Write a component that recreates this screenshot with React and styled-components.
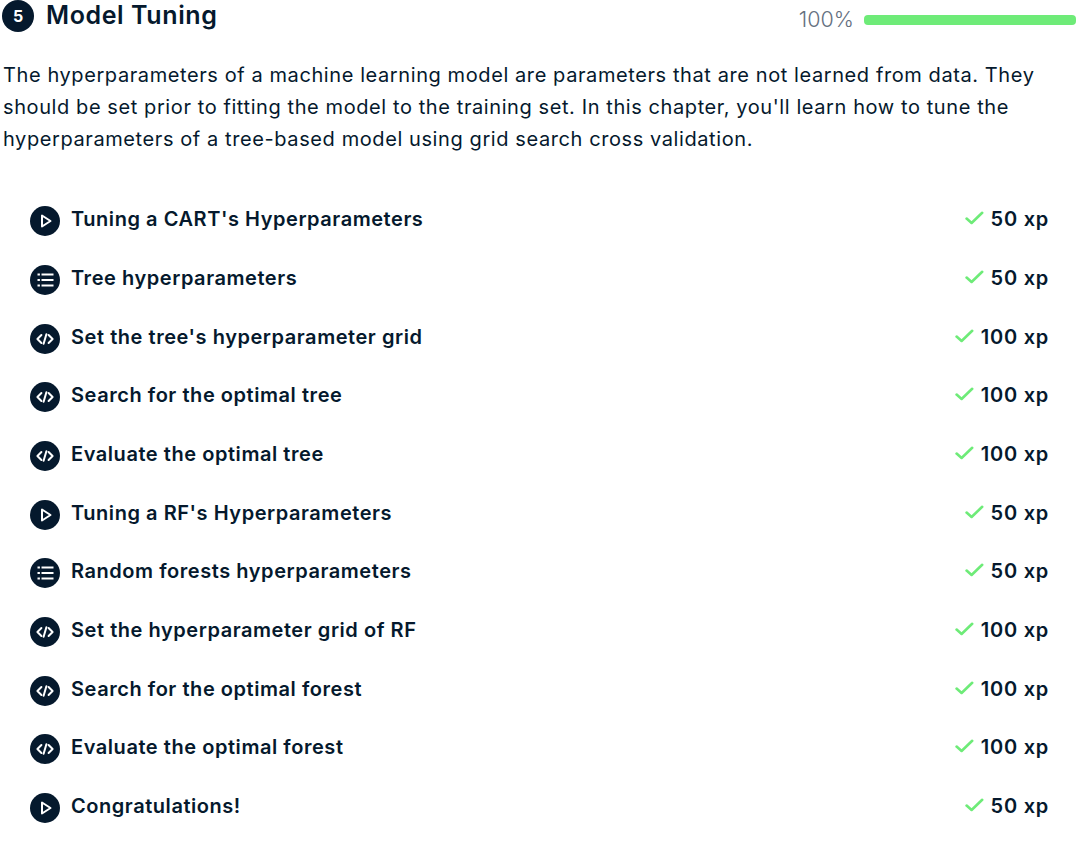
import styled, { createGlobalStyle } from 'styled-components';

const GlobalStyle = createGlobalStyle`
  html, body {
    margin: 0;
    padding: 0;
    background: #fff;
  }
`;

const lessons = [
  { kind: 'video', title: "Tuning a CART's Hyperparameters", xp: 50 },
  { kind: 'quiz', title: 'Tree hyperparameters', xp: 50 },
  { kind: 'code', title: "Set the tree's hyperparameter grid", xp: 100 },
  { kind: 'code', title: 'Search for the optimal tree', xp: 100 },
  { kind: 'code', title: 'Evaluate the optimal tree', xp: 100 },
  { kind: 'video', title: "Tuning a RF's Hyperparameters", xp: 50 },
  { kind: 'quiz', title: 'Random forests hyperparameters', xp: 50 },
  { kind: 'code', title: 'Set the hyperparameter grid of RF', xp: 100 },
  { kind: 'code', title: 'Search for the optimal forest', xp: 100 },
  { kind: 'code', title: 'Evaluate the optimal forest', xp: 100 },
  { kind: 'video', title: 'Congratulations!', xp: 50 },
];

const LessonIcon = ({ kind }) => (
  <IconCircle>
    <svg width="30" height="30" viewBox="0 0 30 30" fill="none" stroke="#fff" strokeLinejoin="round">
      {kind === 'video' && <path d="M12 9.5v11l8.5-5.5z" strokeWidth="2" strokeLinecap="round" />}
      {kind === 'quiz' && (
        <path d="M11.5 9.5h12M11.5 15h12M11.5 20.5h12M7.5 9.5h2.4M7.5 15h2.4M7.5 20.5h2.4" strokeWidth="1.9" />
      )}
      {kind === 'code' && (
        <path
          d="M11.4 11 7.4 15l4 4M18.6 11l4 4-4 4M16.4 10.2l-2.8 9.6"
          strokeWidth="2"
          strokeLinecap="round"
        />
      )}
    </svg>
  </IconCircle>
);

const Check = () => (
  <CheckMark width="19" height="14" viewBox="0 0 19 14" fill="none">
    <path d="M1.6 7.6 6.6 12 17.2 1.8" stroke="#6eeb78" strokeWidth="2.6" strokeLinecap="round" strokeLinejoin="round" />
  </CheckMark>
);

export default function App() {
  return (
    <Page>
      <GlobalStyle />
      <Header>
        <Heading>
          <Badge>5</Badge>
          <Title>Model Tuning</Title>
        </Heading>
        <Progress>
          <Percent>100%</Percent>
          <Track>
            <Fill style={{ width: '100%' }} />
          </Track>
        </Progress>
      </Header>
      <Description>
        The hyperparameters of a machine learning model are parameters that are not learned from data. They
        <br />
        should be set prior to fitting the model to the training set. In this chapter, you'll learn how to tune the
        <br />
        hyperparameters of a tree-based model using grid search cross validation.
      </Description>
      <LessonList>
        {lessons.map(({ kind, title, xp }) => (
          <Lesson key={title}>
            <LessonIcon kind={kind} />
            <LessonTitle>{title}</LessonTitle>
            <Reward>
              <Check />
              <Xp>{xp} xp</Xp>
            </Reward>
          </Lesson>
        ))}
      </LessonList>
    </Page>
  );
}

const Page = styled.div`
  width: 1092px;
  height: 846px;
  overflow: hidden;
  box-sizing: border-box;
  padding: 0 16px 0 2px;
  font-family: 'Inter', 'Liberation Sans', sans-serif;
  color: #05192d;
`;

const Header = styled.div`
  display: flex;
  align-items: center;
  justify-content: space-between;
  height: 32px;
`;

const Heading = styled.div`
  display: flex;
  align-items: center;
  gap: 12px;
`;

const Badge = styled.div`
  width: 32px;
  height: 32px;
  border-radius: 50%;
  background: #05192d;
  color: #fff;
  display: flex;
  align-items: center;
  justify-content: center;
  font-size: 16px;
  font-weight: 700;
`;

const Title = styled.h2`
  margin: 0;
  font-size: 25px;
  line-height: 30px;
  font-weight: 600;
  letter-spacing: 0.6px;
  position: relative;
  top: -1px;
`;

const Progress = styled.div`
  display: flex;
  align-items: center;
  gap: 10px;
  margin-top: 7px;
`;

const Percent = styled.span`
  font-size: 21.5px;
  font-weight: 300;
  color: #65707f;
  position: relative;
  top: -1px;
`;

const Track = styled.div`
  width: 212px;
  height: 10px;
  border-radius: 4px;
  background: #e8e8ea;
  overflow: hidden;
`;

const Fill = styled.div`
  height: 100%;
  background: #6eeb78;
`;

const Description = styled.p`
  margin: 27px 0 0;
  padding-left: 1px;
  font-size: 20px;
  line-height: 32px;
  letter-spacing: 0.59px;
`;

const LessonList = styled.ul`
  list-style: none;
  margin: 37px 0 0;
  padding: 0 0 0 28px;
`;

const Lesson = styled.li`
  display: flex;
  align-items: center;
  height: 58.67px;
  padding-right: 27px;
`;

const IconCircle = styled.span`
  flex: none;
  width: 30px;
  height: 30px;
  border-radius: 50%;
  background: #05192d;
  display: flex;
`;

const LessonTitle = styled.span`
  margin-left: 11px;
  font-size: 20px;
  font-weight: 600;
  letter-spacing: 0.55px;
  position: relative;
  top: -2px;
`;

const Reward = styled.div`
  margin-left: auto;
  display: flex;
  align-items: center;
  gap: 7px;
  position: relative;
  top: -2px;
`;

const CheckMark = styled.svg`
  position: relative;
  top: -1px;
`;

const Xp = styled.span`
  font-size: 20px;
  font-weight: 600;
  letter-spacing: 0.75px;
`;
